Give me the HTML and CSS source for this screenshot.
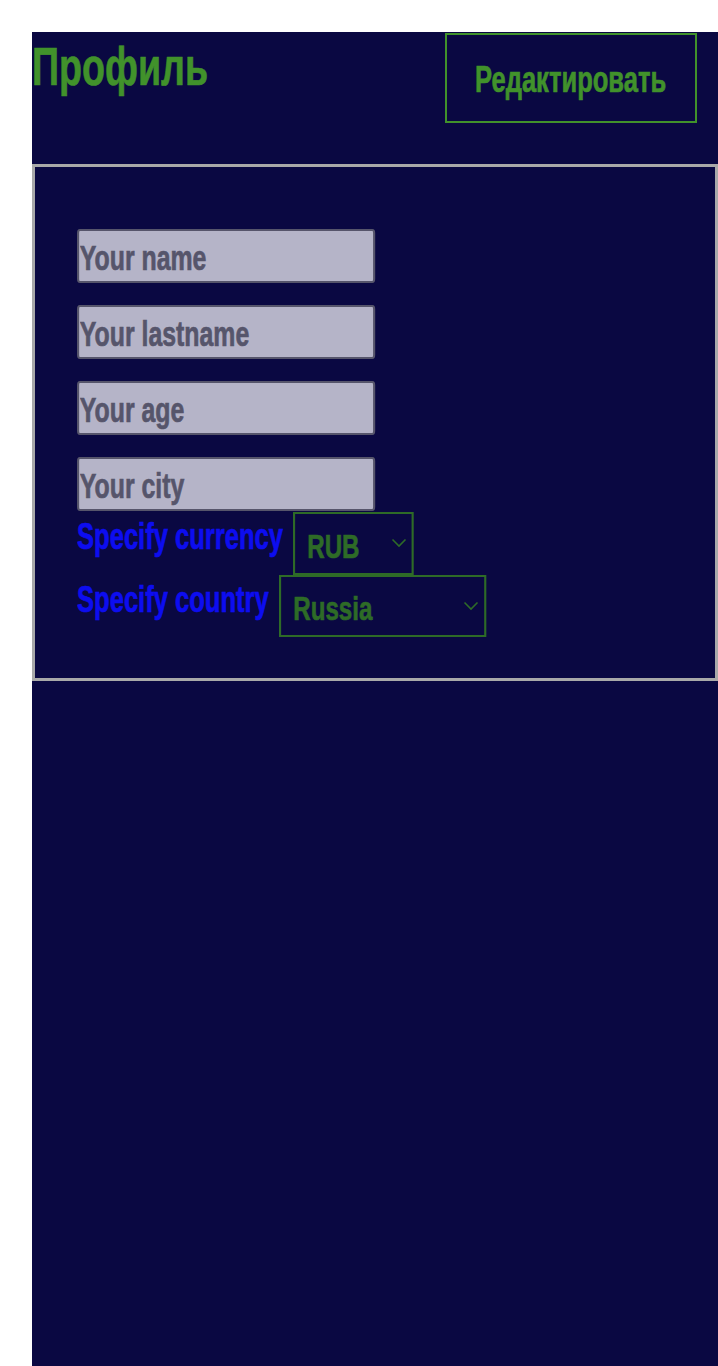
FILE: index.html
```html
<!DOCTYPE html>
<html lang="ru">
<head>
<meta charset="utf-8">
<title>Профиль</title>
<link rel="stylesheet" href="styles.css">
</head>
<body>
<div class="app">
  <header class="header">
    <h1 class="title"><span class="narrow">Профиль</span></h1>
    <button class="edit-btn" type="button"><span class="narrow narrow-center">Редактировать</span></button>
  </header>
  <section class="panel">
    <form class="form">
      <input class="field" type="text" placeholder="Your name">
      <input class="field" type="text" placeholder="Your lastname">
      <input class="field" type="text" placeholder="Your age">
      <input class="field field-last" type="text" placeholder="Your city">
      <div class="row">
        <label class="label label-currency" for="currency"><span class="narrow">Specify currency</span></label>
        <span class="select-wrap wrap-currency">
          <select class="select select-currency" id="currency"><option>RUB</option><option>USD</option><option>EUR</option></select>
          <svg class="chevron" width="16" height="10" viewBox="0 0 16 10"><path d="M1.5 1.5 L8 8 L14.5 1.5" fill="none" stroke="#2e6b27" stroke-width="1.6"/></svg>
        </span>
      </div>
      <div class="row">
        <label class="label label-country" for="country"><span class="narrow">Specify country</span></label>
        <span class="select-wrap wrap-country">
          <select class="select select-country" id="country"><option>Russia</option><option>USA</option></select>
          <svg class="chevron" width="16" height="10" viewBox="0 0 16 10"><path d="M1.5 1.5 L8 8 L14.5 1.5" fill="none" stroke="#2e6b27" stroke-width="1.6"/></svg>
        </span>
      </div>
    </form>
  </section>
</div>
</body>
</html>
```

FILE: styles.css
```css
html, body {
  background: #ffffff;
}
body {
  margin: 32px 0 0 32px;
  font-family: "Liberation Sans", Arial, sans-serif;
  font-weight: bold;
}
.app {
  background: #0a0842;
  min-height: calc(100vh - 32px);
}
/* condensed look: the reference uses a tall narrow face */
.narrow {
  display: inline-block;
  white-space: nowrap;
  transform: scaleX(0.71);
  transform-origin: left center;
  -webkit-text-stroke: 0.7px currentColor;
}
.narrow-center {
  flex: none;
  transform-origin: center center;
}
.header {
  display: flex;
  justify-content: space-between;
  align-items: flex-start;
  height: 132px;
  padding-right: 21px;
}
.title {
  margin: 8px 0 0 0;
  font-size: 53px;
  line-height: 53px;
  font-weight: bold;
  color: #41922b;
}
.edit-btn {
  margin-top: 1px;
  width: 252px;
  height: 90px;
  box-sizing: border-box;
  border: 2px solid #41922b;
  background: transparent;
  color: #41922b;
  font-family: inherit;
  font-weight: bold;
  font-size: 36px;
  padding: 3px 0 0 0;
  display: flex;
  align-items: center;
  justify-content: center;
  overflow: visible;
  white-space: nowrap;
}
.panel {
  border: 3px solid #a9a9a9;
  padding: 62px 42px 41px;
}
.form {
  display: flex;
  flex-direction: column;
  align-items: flex-start;
  margin: 0;
}
.field {
  width: 420px;
  height: 54px;
  box-sizing: border-box;
  border-style: solid;
  border-color: #56556b;
  border-width: 2px 3px;
  border-radius: 4px;
  background: #b5b4c8;
  padding: 4px 1px 0;
  margin: 0 0 22px 0;
  font-family: inherit;
  font-weight: bold;
  font-size: 35px;
  color: #56556b;
  -webkit-text-stroke: 0.7px #56556b;
  transform: scaleX(0.71);
  transform-origin: left center;
}
.field::placeholder {
  color: #56556b;
  opacity: 1;
}
.field-last {
  margin-bottom: 1px;
}
.row {
  display: flex;
  align-items: flex-start;
}
.label {
  display: block;
  color: #0d0df0;
  font-size: 36px;
  line-height: 40px;
  margin-top: 5px;
  white-space: nowrap;
}
.label-currency {
  width: 206px;
}
.label-country {
  width: 191px;
}
.select-wrap {
  position: relative;
  display: block;
}
.wrap-currency {
  margin-left: 10px;
  width: 121px;
  height: 63px;
}
.wrap-country {
  margin-left: 11px;
  width: 207px;
  height: 62px;
}
.select {
  display: block;
  appearance: none;
  -webkit-appearance: none;
  box-sizing: border-box;
  border-style: solid;
  border-color: #2e6b27;
  border-width: 2px 3px;
  border-radius: 0;
  background: transparent;
  color: #2e6b27;
  font-family: inherit;
  font-weight: bold;
  font-size: 34px;
  -webkit-text-stroke: 0.7px #2e6b27;
  padding: 4px 0 0 17px;
  margin: 0;
  transform: scaleX(0.71);
  transform-origin: left center;
}
.select-currency {
  width: 170px;
  height: 63px;
}
.select-country {
  width: 292px;
  height: 62px;
}
.chevron {
  position: absolute;
  right: 7px;
  top: 26px;
  pointer-events: none;
}
```
